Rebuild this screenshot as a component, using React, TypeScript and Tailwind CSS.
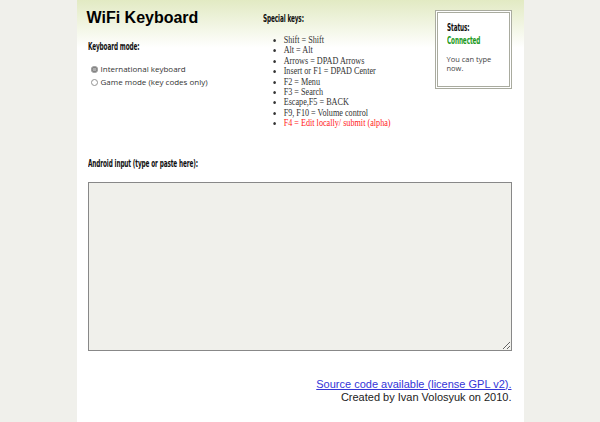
import React, { useState } from 'react';

const keys = [
  'Shift = Shift',
  'Alt = Alt',
  'Arrows = DPAD Arrows',
  'Insert or F1 = DPAD Center',
  'F2 = Menu',
  'F3 = Search',
  'Escape,F5 = BACK',
  'F9, F10 = Volume control',
];

// condensed bold heading, like the original page
const head =
  "w-max origin-left scale-x-[0.58] font-bold text-[11px] leading-[12px] text-[#111] [font-family:'Liberation_Sans_Narrow','DejaVu_Sans_Condensed','Liberation_Sans',sans-serif] tracking-[-0.2px] whitespace-nowrap";

export default function App() {
  const [mode, setMode] = useState('intl');

  return (
    <div className="min-h-[422px] bg-[#f0f0eb]">
      <div className="mx-auto w-[447px] min-h-[422px] bg-[linear-gradient(to_bottom,#e2eac3_0px,#ffffff_48px)] pl-[10px] pr-[12px] pt-[8px] text-[12px] leading-[14px] [font-family:'Liberation_Sans',Arial,sans-serif]">
        {/* 상단: 제목 / 특수키 / 상태 */}
        <div className="flex">
          <div className="w-[176px] shrink-0">
            <h1 className="text-[16px] font-bold leading-[20px] text-black">WiFi Keyboard</h1>
            <div className={head + ' mt-[13px] ml-[1px]'}>Keyboard mode:</div>
            <div className="mt-[11px] pl-[4px] flex flex-col gap-[3px] text-[8px] leading-[10px] text-[#333] [font-family:'Open_Sans','DejaVu_Sans',sans-serif]">
              <label className="flex items-center gap-[3px]">
                <input
                  type="radio"
                  name="mode"
                  checked={mode === 'intl'}
                  onChange={() => setMode('intl')}
                  className="m-0 h-[7px] w-[7px] accent-[#999] opacity-80"
                />
                <span>International keyboard</span>
              </label>
              <label className="flex items-center gap-[3px]">
                <input
                  type="radio"
                  name="mode"
                  checked={mode === 'game'}
                  onChange={() => setMode('game')}
                  className="m-0 h-[7px] w-[7px] accent-[#999] opacity-80"
                />
                <span>Game mode (key codes only)</span>
              </label>
            </div>
          </div>

          <div className="flex-1 pt-[5px]">
            <div className={head}>Special keys:</div>
            <ul className="mt-[10px] w-max origin-left scale-x-[0.86] list-disc pl-[24px] text-[9.5px] leading-[10.4px] text-[#333] [font-family:'Liberation_Serif','Times_New_Roman',serif]">
              {keys.map((k) => (
                <li key={k}>{k}</li>
              ))}
              <li className="text-[#ff2020] marker:text-[#333]">F4 = Edit locally/ submit (alpha)</li>
            </ul>
          </div>

          <div className="mt-[2px] h-[79px] w-[77px] shrink-0 border-[3px] border-double border-[#a9ab9f] bg-white pl-[9px] pr-[4px] pt-[9px]">
            <div className={head}>Status:</div>
            <div className={head + ' mt-[1px] !text-[#1c9a1c]'}>Connected</div>
            <p className="mt-[8px] text-[7.5px] leading-[9px] text-[#444] [font-family:'Open_Sans','DejaVu_Sans',sans-serif]">
              You can type now.
            </p>
          </div>
        </div>

        {/* 입력 영역 */}
        <div className={head + ' mt-[29px] ml-[1px]'}>Android input (type or paste here):</div>
        <textarea className="mt-[12px] ml-[1px] block h-[169px] w-[424px] resize border border-[#888] bg-[#f0f0eb] outline-none" />

        {/* 하단 */}
        <div className="mt-[27px] text-right text-[11px] leading-[13px]">
          <a href="#" className="text-[#3434d8] underline">
            Source code available (license GPL v2).
          </a>
          <div className="text-[#222]">Created by Ivan Volosyuk on 2010.</div>
        </div>
      </div>
    </div>
  );
}
